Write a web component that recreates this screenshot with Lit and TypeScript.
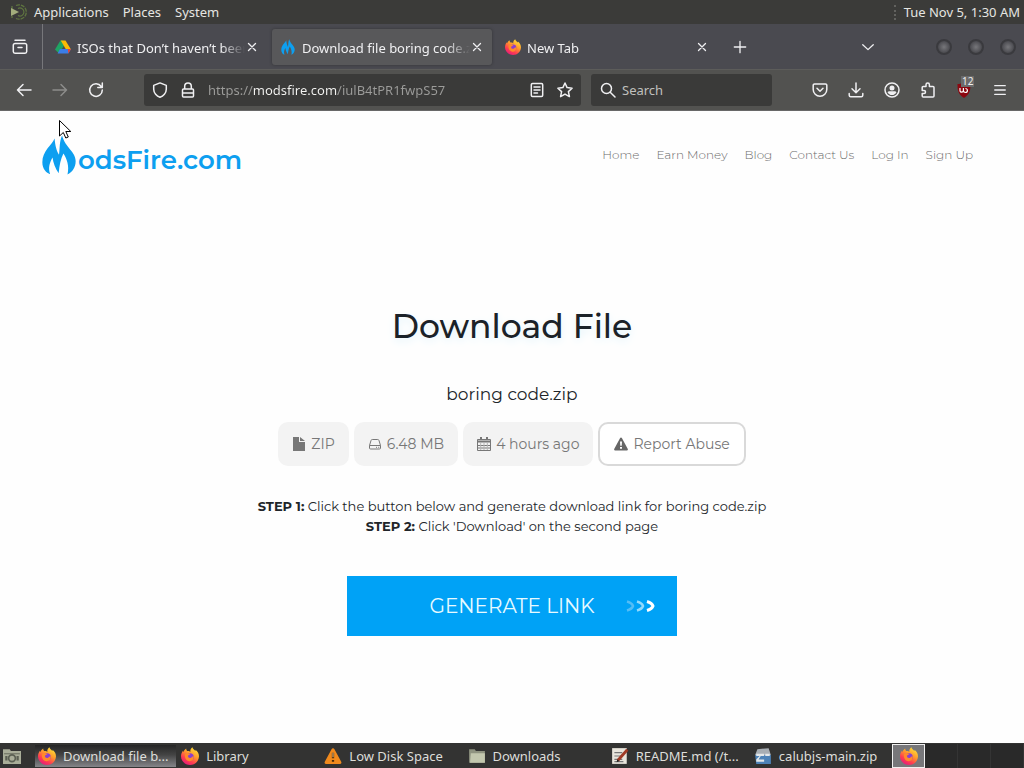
import { LitElement, html, css, svg, nothing } from "lit";
import { customElement, property } from "lit/decorators.js";

const flame = (cls: string) => html`<svg class=${cls} viewBox="11 62 100 117" aria-hidden="true">
  <path fill="#0d9ff0" d="M48 72C40 92 12 108 12 142C12 162 24 174 35 177C28 158 34 142 42 128C44 144 50 160 60 174C62 152 66 132 74 116C84 132 92 152 86 178C100 170 110 158 110 138C110 110 80 100 70 63C62 80 64 98 61 120C54 108 50 95 48 72Z"/>
</svg>`;

const firefox = html`<svg class="i16" viewBox="0 0 16 16" aria-hidden="true">
  <defs>
    <linearGradient id="ff" x1=".8" y1="0" x2=".2" y2="1">
      <stop offset="0" stop-color="#ffe83a"/><stop offset=".4" stop-color="#ff9a2c"/>
      <stop offset=".7" stop-color="#ff3f4f"/><stop offset="1" stop-color="#e01582"/>
    </linearGradient>
  </defs>
  <path fill="url(#ff)" d="M10.2.2c.3 1.6 1.6 2.2 2.5 3.3.3-.3.2-.8.2-1.1C15 4 16 6 16 8.500C15.800 12.700 12.400 16 8 16S0 12.600 0 8.300C0 6 1 4.200 1.700 3.300c0 .5.1.8.3 1.100C2.600 3 3.600 2 4.600 1.300c0 .9.3 1.700.9 2.300C7.200 3.400 7.900 4 8.300 4.600 8 2.800 8.800 1 10.200.2Z"/>
  <circle cx="8" cy="8.800" r="3.300" fill="#8a3fd0"/>
  <path fill="#ff8a2a" d="M3.600 6.200c1.500-1 3.500-.9 4.800.2-.7.5-1.900.6-2.200 1.400-.3 1.200.9 2.300 2.300 1.900 1.300-.3 1.500-1.600 2.600-1.400.6 2.800-1.400 4.500-3.600 4.400C4.500 12.500 2.900 9 3.600 6.200Z"/>
</svg>`;

const drive = html`<svg class="i16" viewBox="0 0 16 16" aria-hidden="true">
  <path fill="#1fa463" d="M5.400 1.500h2.800L10 5 4 14.500 0 10.500Z"/>
  <path fill="#fbbc04" d="M5.700 1.500h4.800L16 10.500h-5Z"/>
  <path fill="#3b7de8" d="M5 10h11l-2.600 4.500H2.600Z"/>
  <path fill="#ea4335" d="M12.800 10H16l-2.600 4.500Z"/>
</svg>`;

const line = (d: string, cls = "i16") => html`<svg class=${cls} viewBox="0 0 16 16" fill="none"
  stroke="currentColor" stroke-width="1.5" stroke-linecap="round" stroke-linejoin="round" aria-hidden="true">
  ${svg`<path d=${d}/>`}
</svg>`;

const paths = {
  box: "M3 1.200h10M3 4.500h10a1.700 1.700 0 0 1 1.700 1.700v6.300A1.700 1.700 0 0 1 13 14.200H3a1.700 1.700 0 0 1-1.700-1.700V6.200A1.700 1.700 0 0 1 3 4.500ZM6 8.500h4",
  close: "M4 4l8 8M12 4l-8 8",
  plus: "M8 1.500v13M1.500 8h13",
  down: "M2 5.500L8 11l6-5.500",
  back: "M15 8H1.500M7 2.500L1.500 8 7 13.500",
  forward: "M1 8h13.500M9 2.500L14.500 8 9 13.500",
  reload: "M13.200 4.500A6.300 6.300 0 1 0 14.300 8M14.300 1v4.500H9.800",
  shield: "M8 .9l6.300 2.500v3.800c0 3.800-3 7-6.300 8-3.300-1-6.300-4.200-6.300-8V3.400Z",
  lock: "M4.700 7V4.200a3.300 3.300 0 0 1 6.600 0V7M3.500 7h9a1 1 0 0 1 1 1v6a1 1 0 0 1-1 1h-9a1 1 0 0 1-1-1V8a1 1 0 0 1 1-1ZM2.500 11h11",
  reader: "M3.500 1.500h9a1.200 1.200 0 0 1 1.200 1.200v10.600a1.200 1.200 0 0 1-1.200 1.200h-9a1.200 1.200 0 0 1-1.200-1.200V2.700a1.200 1.200 0 0 1 1.200-1.200ZM5 5h6M5 8h6M5 11h3.500",
  star: "M8 1l2.100 4.600 5 .6-3.700 3.400 1 5L8 12.100 3.600 14.600l1-5L.9 6.200l5-.6Z",
  search: "M6.500 1.500a5 5 0 1 1 0 10 5 5 0 0 1 0-10ZM10.200 10.200L15 15",
  pocket: "M2.500 2h11a1.300 1.300 0 0 1 1.300 1.300V7.500a6.800 6.800 0 0 1-13.600 0V3.300A1.300 1.300 0 0 1 2.500 2ZM5 6.300l3 3 3-3",
  download: "M8 1v9.500M4 6.800l4 4 4-4M1.200 11.500v1.800a1.500 1.500 0 0 0 1.500 1.500h10.600a1.500 1.500 0 0 0 1.500-1.500v-1.800",
  puzzle: "M6 4.500V2.700a1.700 1.700 0 0 1 3.400 0v1.800H13a1 1 0 0 1 1 1V14a1 1 0 0 1-1 1H3.200a1 1 0 0 1-1-1v-2.500H4a1.500 1.500 0 0 0 0-3H2.200v-3a1 1 0 0 1 1-1Z",
  menu: "M2 3h12M2 8h12M2 13h12",
};

const account = html`<svg class="i16" viewBox="0 0 16 16" aria-hidden="true">
  <circle cx="8" cy="8" r="7" fill="none" stroke="currentColor" stroke-width="1.500"/>
  <circle cx="8" cy="6" r="2.500" fill="currentColor"/>
  <path fill="currentColor" d="M3.500 10.200c.4-.7 1-1 1.800-1h5.400c.8 0 1.400.3 1.800 1-1 1.900-2.600 2.800-4.500 2.800s-3.500-.9-4.500-2.800Z"/>
</svg>`;

const folder = html`<svg class="i16" viewBox="0 0 16 16" aria-hidden="true">
  <path fill="#8f9380" d="M1 2h5l1 1.500h8V14H1Z"/><path fill="#c3c7ae" d="M2.500 5.500H15V14H1.800Z"/>
</svg>`;

@customElement("tool-button")
class ToolButton extends LitElement {
  @property() label = "";
  static styles = css`
    button { display: flex; align-items: center; justify-content: center; width: 36px; height: 32px; padding: 0; border: 0; background: none; color: inherit; }
  `;
  render() {
    return html`<button aria-label=${this.label}><slot></slot></button>`;
  }
}

@customElement("desktop-panel")
class DesktopPanel extends LitElement {
  static styles = css`
    :host { display: block; }
    .panel { display: flex; align-items: center; height: 24px; padding: 0 4px 0 10px; background: #3b3b39; color: #e6e6e2; font: 13px/24px "Noto Sans", sans-serif; }
    nav { display: flex; gap: 14px; }
    button { padding: 0; border: 0; background: none; color: inherit; font: inherit; }
    .logo { width: 18px; height: 18px; margin-right: 6px; }
    .grip { width: 0; height: 15px; margin-left: auto; margin-right: 8px; border-left: 2px dotted #62625f; }
  `;
  render() {
    return html`<header class="panel">
      <svg class="logo" viewBox="0 0 18 18" aria-hidden="true">
        <path d="M2 3v12M6 2.500a7.200 7.200 0 1 1 0 13" fill="none" stroke="#5f7540" stroke-width="1.300" stroke-dasharray="4 1"/>
        <path d="M8 5.500a4 4 0 1 1 0 7" fill="none" stroke="#5f7540" stroke-width="1.200"/>
        <path d="M1 5l8 4-8 4Z" fill="#a3ad7c"/>
      </svg>
      <nav><button>Applications</button><button>Places</button><button>System</button></nav>
      <span class="grip"></span><time>Tue Nov 5, 1:30 AM</time>
    </header>`;
  }
}

@customElement("browser-chrome")
class BrowserChrome extends LitElement {
  static styles = css`
    :host { display: block; color: #f0f0f2; font: 13px/20px "Noto Sans", sans-serif; }
    svg { display: block; flex: none; }
    .i16 { width: 16px; height: 16px; }
    .i14 { width: 14px; height: 14px; }
    .strip { display: flex; align-items: center; height: 45px; background: #4a4a50; }
    .view { display: flex; align-items: center; justify-content: center; width: 43px; align-self: stretch; box-sizing: border-box; border-right: 1px solid #77777b; padding-right: 2px; }
    .tabs { display: flex; gap: 5px; flex: 0 1 670px; min-width: 0; margin-left: 4px; }
    .tab { display: flex; align-items: center; flex: 1 1 0; min-width: 0; height: 36px; box-sizing: border-box; padding: 0 8px; border-radius: 3px; }
    .on { background: #58585a; box-shadow: 0 0 3px #333336; }
    .title { display: flex; align-items: center; gap: 6px; flex: 1; min-width: 0; padding: 0; border: 0; background: none; color: inherit; font: inherit; text-align: left; }
    .name { flex: 1; min-width: 0; padding-top: 2px; overflow: hidden; white-space: nowrap; -webkit-mask-image: linear-gradient(to left, transparent, #000 24px); mask-image: linear-gradient(to left, transparent, #000 24px); }
    .close { display: flex; padding: 0; border: 0; background: none; color: inherit; }
    .fav { width: 16px; height: 16px; }
    .add { margin-left: 5px; }
    .list { margin-left: auto; }
    .win { display: flex; gap: 16px; margin: 0 8px 0 50px; }
    .dot { width: 16px; height: 16px; padding: 0; border: 2px solid #3a3a3e; border-radius: 50%; background: radial-gradient(#77777b, #515156 60%, #3e3e42); }
    .bar { display: flex; align-items: center; height: 42px; padding: 0 6px; box-sizing: border-box; background: #525250; border-top: 1px solid #5c5c5a; border-bottom: 1px solid #686868; }
    .dim { color: #8d8d8b; }
    .field { display: flex; align-items: center; height: 32px; box-sizing: border-box; background: #3a3a39; border-radius: 3px; min-width: 0; }
    .url { flex: 1; margin-left: 30px; padding: 0 8px; gap: 12px; }
    .find { flex: 0 1 181px; margin: 0 30px 0 10px; padding: 0 9px; gap: 6px; }
    input { flex: 1; min-width: 0; width: 0; padding: 0; border: 0; outline: 0; background: none; color: #c0c0be; font: inherit; }
    .addr { color: transparent; background: linear-gradient(to right, #9c9c9a 45px, #f4f4f2 45px 129px, #9c9c9a 129px); -webkit-background-clip: text; background-clip: text; }
    .find input::placeholder { color: #c0c0be; opacity: 1; }
    .badge { position: relative; display: block; }
    .count { position: absolute; left: 5px; top: -6px; padding: 0 1px; background: #6b6b6b; color: #f0f0f0; font: 10px/11px "Noto Sans", sans-serif; }
  `;
  tab(icon: unknown, name: string, on = false) {
    return html`<div class="tab ${on ? "on" : ""}">
      <button class="title" role="tab" aria-selected=${on}>${icon}<span class="name">${name}</span></button>
      <button class="close" aria-label="Close tab">${line(paths.close, "i14")}</button>
    </div>`;
  }
  render() {
    return html`
      <div class="strip">
        <div class="view"><tool-button label="Firefox View">${line(paths.box)}</tool-button></div>
        <div class="tabs" role="tablist">
          ${this.tab(drive, "ISOs that Don’t haven’t been")}
          ${this.tab(flame("fav"), "Download file boring code.z", true)}
          ${this.tab(firefox, "New Tab")}
        </div>
        <tool-button class="add" label="New tab">${line(paths.plus, "i14")}</tool-button>
        <tool-button class="list" label="List all tabs">${line(paths.down, "i14")}</tool-button>
        <div class="win">
          <button class="dot" aria-label="Minimize"></button>
          <button class="dot" aria-label="Maximize"></button>
          <button class="dot" aria-label="Close window"></button>
        </div>
      </div>
      <div class="bar">
        <tool-button label="Back">${line(paths.back)}</tool-button>
        <tool-button class="dim" label="Forward">${line(paths.forward)}</tool-button>
        <tool-button label="Reload">${line(paths.reload)}</tool-button>
        <div class="field url">
          ${line(paths.shield)}${line(paths.lock)}
          <input class="addr" aria-label="Address" value="https://modsfire.com/iulB4tPR1fwpS57">
          ${line(paths.reader)}${line(paths.star)}
        </div>
        <div class="field find">${line(paths.search)}<input aria-label="Search" placeholder="Search"></div>
        <tool-button label="Save to Pocket">${line(paths.pocket)}</tool-button>
        <tool-button label="Downloads">${line(paths.download)}</tool-button>
        <tool-button label="Account">${account}</tool-button>
        <tool-button label="Extensions">${line(paths.puzzle)}</tool-button>
        <tool-button label="uBlock Origin"><span class="badge">
          <svg class="i16" viewBox="0 0 16 16" aria-hidden="true">
            <path fill="#8c0710" d="M8 0c2.300 1.500 4 2 6.500 2 0 6-.5 10-6.500 14C2 12 1.500 8 1.500 2 4 2 5.700 1.500 8 0Z"/>
            <path fill="none" stroke="#fff" stroke-width="1.200" d="M4 6v2.500a1.700 1.700 0 0 0 3.400 0V6M7.400 8.500a2 2 0 1 0 2-2"/>
          </svg><span class="count">12</span></span></tool-button>
        <tool-button label="Menu">${line(paths.menu, "i14")}</tool-button>
      </div>`;
  }
}

@customElement("download-page")
class DownloadPage extends LitElement {
  static styles = css`
    :host { display: flex; flex-direction: column; background: #fefefe; color: #212529; font: 14px/20px Montserrat, Inter, sans-serif; }
    header { display: flex; align-items: center; justify-content: space-between; height: 88px; padding: 0 51px 0 42px; }
    a { color: inherit; text-decoration: none; }
    .brand { display: flex; align-items: flex-end; gap: 2px; color: #0d9ff0; font: 600 26px/30px Montserrat, Inter, sans-serif; }
    .mark { width: 34px; height: 40px; }
    nav { display: flex; gap: 17px; color: #6c6c6c; font-size: 12px; font-weight: 300; }
    main { display: flex; flex-direction: column; align-items: center; padding-top: 104px; text-align: center; }
    h1 { margin: 0; font-size: 33px; line-height: 46px; font-weight: 500; color: #1b2228; text-shadow: 0 3px 8px #e2f4fb; }
    h2 { margin: 32px 0 15px; font-size: 17px; line-height: 26px; font-weight: 400; }
    .pills { display: flex; gap: 5px; color: #777; }
    .pill { display: flex; align-items: center; gap: 5px; height: 44px; box-sizing: border-box; padding: 0 14px; border: 0; border-radius: 10px; background: #f3f3f3; color: inherit; font: inherit; }
    .report { border: 2px solid #d9d9d9; background: #fff; }
    .pill svg { width: 14px; height: 14px; }
    .steps { margin: 30px 0 40px; font-size: 13px; }
    p { margin: 0; }
    .go { display: grid; grid-template-columns: 1fr auto 1fr; align-items: center; width: 330px; height: 60px; padding: 0 20px; border: 0; background: #00a2f6; color: #e8faff; font: 20px/28px Montserrat, Inter, sans-serif; }
    .arrows { grid-column: 3; justify-self: end; width: 32px; height: 12px; }
    .label { grid-column: 2; }
  `;
  render() {
    return html`
      <header>
        <a class="brand" href="#">${flame("mark")}<span>odsFire.com</span></a>
        <nav>${["Home", "Earn Money", "Blog", "Contact Us", "Log In", "Sign Up"].map((t) => html`<a href="#">${t}</a>`)}</nav>
      </header>
      <main>
        <h1>Download File</h1>
        <h2>boring code.zip</h2>
        <div class="pills">
          <span class="pill"><svg viewBox="0 0 14 14" aria-hidden="true"><path fill="#777" d="M1 0h6v5h6v9H1ZM8 0l5 4H8Z"/></svg>ZIP</span>
          <span class="pill"><svg viewBox="0 0 14 14" fill="none" stroke="#777" aria-hidden="true"><path d="M1.500 8.500L3 3.500q.3-1 1.300-1h5.400q1 0 1.300 1l1.500 5v2.500q0 1-1 1h-9q-1 0-1-1ZM1.500 8.500h11M8 10.300h1M10.200 10.300h1"/></svg>6.48 MB</span>
          <span class="pill"><svg viewBox="0 0 14 14" fill="none" stroke="#777" aria-hidden="true"><path d="M.5 2.500h13v11H.5ZM.5 8.500h13M.5 11h13"/><path stroke="#b5b5b5" d="M3.700 6v7M7 6v7M10.300 6v7"/><path stroke-width="2" d="M1 4.500h12M4 0v3M10 0v3"/></svg>4 hours ago</span>
          <button class="pill report"><svg viewBox="0 0 14 14" aria-hidden="true"><path fill="#666" fill-rule="evenodd" d="M7 .500q.6 0 1 .7l5.800 10.800q.4 1.500-1 1.500H1.200q-1.400 0-1-1.500L6 1.200q.4-.7 1-.7ZM6 4.500l.3 4.300h1.400L8 4.500ZM6 10v1.800h2V10Z"/></svg>Report Abuse</button>
        </div>
        <div class="steps">
          <p><b>STEP 1:</b> Click the button below and generate download link for boring code.zip</p>
          <p><b>STEP 2:</b> Click 'Download' on the second page</p>
        </div>
        <button class="go"><span class="label">GENERATE LINK</span>
          <svg class="arrows" viewBox="0 0 32 12" fill="none" stroke-width="2.500" aria-hidden="true">
            <path stroke="#54bdf5" d="M2 1.500q5 1.500 6 4.500-1 3-6 4.500"/><path stroke="#93dafc" d="M12 1.500q5 1.500 6 4.500-1 3-6 4.500"/><path stroke="#fff" stroke-width="3" d="M22 1.500q5 1.500 6 4.500-1 3-6 4.500"/>
          </svg></button>
      </main>`;
  }
}

@customElement("task-bar")
class TaskBar extends LitElement {
  static styles = css`
    :host { display: block; }
    footer { display: flex; align-items: center; height: 25px; background: #333332; color: #dededa; font: 13px/22px "Noto Sans", sans-serif; }
    svg { display: block; flex: none; }
    .i16 { width: 18px; height: 18px; }
    button { border: 0; background: none; color: inherit; font: inherit; }
    .desk { padding: 0 14px 0 3px; }
    .tasks { display: flex; flex: 1; gap: 2px; min-width: 0; }
    .task { display: flex; align-items: center; gap: 7px; flex: 1 1 0; min-width: 0; height: 22px; padding: 0 3px; text-align: left; white-space: nowrap; }
    .on { background: linear-gradient(#252525, #444 45%, #858589); }
    .spaces { display: flex; }
    .space { display: flex; align-items: center; justify-content: center; width: 33px; height: 24px; padding: 0; box-sizing: border-box; background: #292929; border-right: 1px solid #343434; }
    .here { background: #77777a; border: 1px solid #f0f0f0; }
  `;
  render() {
    const warn = html`<svg class="i16" viewBox="0 0 16 16" aria-hidden="true"><path fill="#f08a1d" d="M8 1q.8 0 1.300 1l6 11q.7 2-1 2H1.700q-1.700 0-1-2l6-11Q7.200 1 8 1Z"/><path stroke="#4b2a08" stroke-width="2" d="M8 5v5M8 11.500v1.700"/><path fill="#ffd79a" d="M7.600 5h.8v4h-.8Z"/></svg>`;
    const note = html`<svg class="i16" viewBox="0 0 16 16" aria-hidden="true"><path fill="#e9e5dc" d="M1 1h13v14H1Z"/><path stroke="#777" d="M3 5h7M3 8h6M3 11h7M3 13h8"/><path stroke="#a03a25" stroke-width="2.500" d="M14.500 2.500L6 12"/><path fill="#222" d="M5 13.500l.5-2.500 2 1.500Z"/></svg>`;
    const zip = html`<svg class="i16" viewBox="0 0 16 16" aria-hidden="true"><path fill="#a8aeb4" d="M3 2l10-1 2 6H1Z"/><path fill="#4e83b8" d="M1 7h14v8H2Z"/><path fill="#e4e8ea" d="M2 6h7v2H6l-2 3h5v2H2v-2l3-3H2ZM10 6h4v2h-4Z"/></svg>`;
    const tasks: [unknown, string][] = [
      [firefox, "Download file b..."], [firefox, "Library"], [warn, "Low Disk Space"],
      [folder, "Downloads"], [note, "README.md (/t..."], [zip, "calubjs-main.zip"],
    ];
    return html`<footer>
      <button class="desk" aria-label="Show desktop"><svg class="i16" viewBox="0 0 16 16" aria-hidden="true"><path fill="#a9ad98" d="M0 2h6l1 1.500h9V15H0Z"/><path stroke="#6e7262" d="M1 6h14"/><circle cx="8" cy="10" r="3" fill="none" stroke="#5b5f52" stroke-width="1.500"/><path fill="#5b5f52" d="M2 8h2v4H2ZM12 8h2v4h-2Z"/></svg></button>
      <div class="tasks">${tasks.map(([i, t], n) => html`<button class="task ${n === 0 ? "on" : ""}">${i}<span>${t}</span></button>`)}</div>
      <div class="spaces">${[0, 1, 2, 3].map((n) => html`<button class="space ${n === 0 ? "here" : ""}" aria-label="Workspace ${n + 1}">${n === 0 ? firefox : nothing}</button>`)}</div>
    </footer>`;
  }
}

@customElement("app-root")
class AppRoot extends LitElement {
  static styles = css`
    :host { position: relative; display: flex; flex-direction: column; min-height: 100vh; }
    download-page { flex: 1; }
    .cursor { position: absolute; left: 58px; top: 119px; width: 14px; height: 21px; }
  `;
  render() {
    return html`
      <desktop-panel></desktop-panel>
      <browser-chrome></browser-chrome>
      <download-page></download-page>
      <task-bar></task-bar>
      <svg class="cursor" viewBox="0 0 14 21" aria-hidden="true"><path fill="#fff" stroke="#000" d="M1.500 1.500v15.500l3.800-3.500 2.500 5.500 2.500-1-2.500-5.500h5Z"/></svg>`;
  }
}
